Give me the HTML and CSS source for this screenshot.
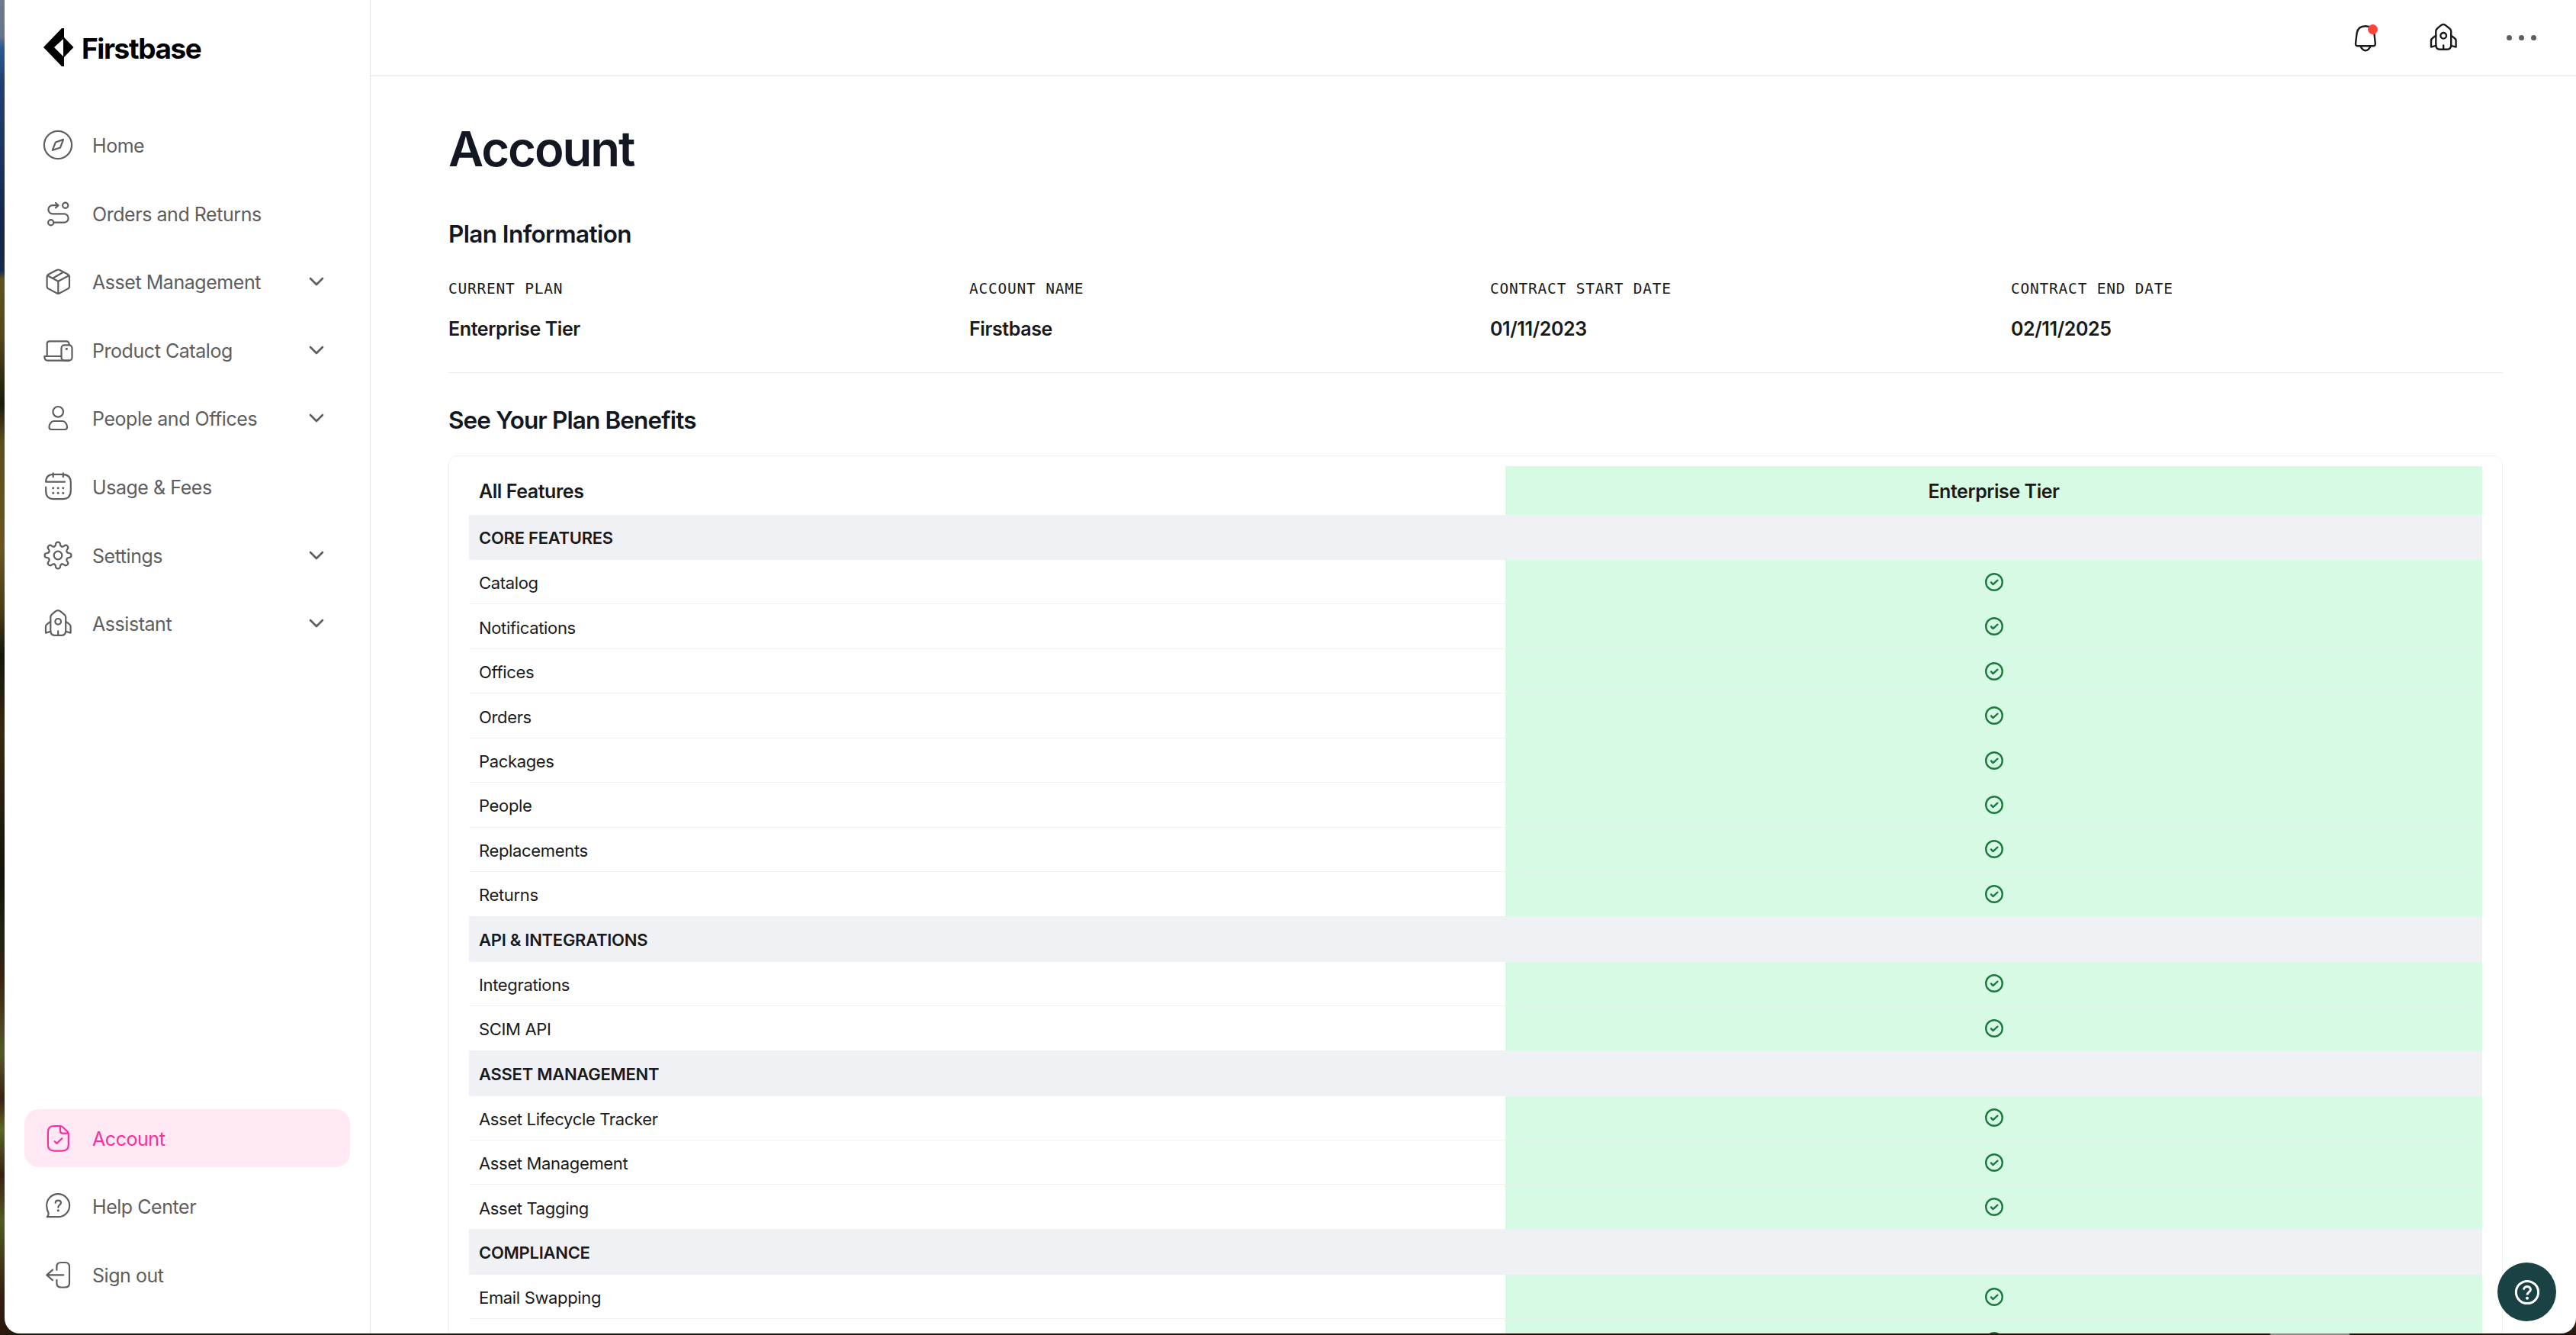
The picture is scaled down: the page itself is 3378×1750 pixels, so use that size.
FILE: index.html
```
<!DOCTYPE html>
<html lang="en">
    <head>
        <meta charset="UTF-8">
        <title>Account | Firstbase</title>
        <link rel="stylesheet" href="styles.css">
    </head>
    <body>
        <!-- Shared icons -->
        <svg class="sprite" aria-hidden="true">
            <symbol id="chevron" viewBox="0 0 20 12">
                <path d="M2 2l8 8 8-8"/>
            </symbol>
            <symbol id="rocket" viewBox="0 0 40 40">
                <path d="M10.3 11.5C10.3 9 12 8.6 16.7 4.4Q20 1.8 23.3 4.4C28 8.6 30.2 9 30.2 11.5V29.5Q30.2 35.8 25 35.8H15.5Q10.3 35.8 10.3 29.5Z"/>
                <circle cx="20.2" cy="17.8" r="3.8"/>
                <path d="M10.3 17.8L6.3 20.6Q4 22 4 24.5V32.6L10.3 30.8M30.2 17.8L34.2 20.6Q36.6 22 36.6 24.5V32.6L30.2 30.8M20.2 30.4V35.6"/>
            </symbol>
            <symbol id="tooth" viewBox="0 0 40 40">
                <path d="M15.3 8.4C17.1 7.7 16.8 6.8 17 5.4C17.4 1.6 22.6 1.6 23 5.4C23.2 6.8 22.9 7.7 24.7 8.4"/>
            </symbol>
            <symbol id="check" viewBox="0 0 24 24">
                <circle cx="12" cy="12" r="10.8"/>
                <path d="M8 12.4l2.5 2.7 6-5.4"/>
            </symbol>
        </svg>

        <div class="window">
            <aside class="sidebar">
                <div class="logo">
                    <svg class="logo-mark" viewBox="0 0 40 50">
                        <path fill-rule="evenodd" d="M24 0H27V12L39.5 25 27 38V50H24L0 25ZM26 14L14 25 26 37Z"/>
                    </svg>
                    <span>Firstbase</span>
                </div>

                <nav class="nav">
                    <a class="nav-item">
                        <svg class="icon" viewBox="0 0 40 40"><circle cx="20" cy="20" r="18.1"/><path d="M27 12.9L17.6 16.2Q17 16.5 16.6 17.2L12.8 26.9 22.4 23.7Q23.1 23.4 23.4 22.7Z"/></svg>
                        <span>Home</span>
                    </a>
                    <a class="nav-item">
                        <svg class="icon" viewBox="0 0 40 40"><circle cx="29.7" cy="9.2" r="3.6"/><circle cx="10.7" cy="31.7" r="3.6"/><path d="M20.3 9.2H13A5.6 5.6 0 0 0 13 20.4H28A5.6 5.6 0 0 1 28 31.7H14.5M17 6l3.6 3.2-3.6 3.2"/></svg>
                        <span>Orders and Returns</span>
                    </a>
                    <a class="nav-item">
                        <svg class="icon" viewBox="0 0 40 40"><path d="M18.3 5Q20.3 4 22.3 5L33.2 10.8Q35 11.8 35 13.8V26.5Q35 28.5 33.2 29.4L22.3 35.3Q20.3 36.4 18.3 35.3L7.4 29.4Q5.6 28.5 5.6 26.5V13.8Q5.6 11.8 7.4 10.8Z"/><path d="M6.3 12.2L20.3 19.8 34.3 12.2M20.3 19.8V36M13.2 15.8L27 7.8"/></svg>
                        <span>Asset Management</span>
                        <svg class="chevron"><use href="#chevron"/></svg>
                    </a>
                    <a class="nav-item">
                        <svg class="icon" viewBox="0 0 40 40"><path d="M5.7 27.5V11.5Q5.7 8.3 9 8.3H31Q34.6 8.3 34.8 13.2M24.3 28H2.3Q2.3 33.6 6.5 33.6H34.5"/><rect x="24.5" y="13.4" width="14" height="20.2" rx="4"/><circle class="dot" cx="31.3" cy="18.3" r="1.6"/></svg>
                        <span>Product Catalog</span>
                        <svg class="chevron"><use href="#chevron"/></svg>
                    </a>
                    <a class="nav-item">
                        <svg class="icon" viewBox="0 0 40 40"><circle cx="20.2" cy="11.8" r="6.8"/><path d="M14.5 24H26C29.5 24 32 28.5 32 32Q32 35 29 35H11.5Q8.5 35 8.5 32C8.5 28.5 11 24 14.5 24Z"/></svg>
                        <span>People and Offices</span>
                        <svg class="chevron"><use href="#chevron"/></svg>
                    </a>
                    <a class="nav-item">
                        <svg class="icon" viewBox="0 0 40 40"><path d="M29 13.7H4.2Q4.2 3.9 14 3.9H26Q36.8 3.9 36.8 15V25Q36.8 36.1 26 36.1H14.5Q4.2 36.1 4.2 25.5V20.7M13.7 2.4V7.2M26.8 2.4V7.2"/><g class="dot"><circle cx="13.7" cy="21.7" r="1.5"/><circle cx="20.2" cy="21.7" r="1.5"/><circle cx="26.8" cy="21.7" r="1.5"/><circle cx="13.7" cy="28.3" r="1.5"/><circle cx="20.2" cy="28.3" r="1.5"/><circle cx="26.8" cy="28.3" r="1.5"/></g></svg>
                        <span>Usage &amp; Fees</span>
                    </a>
                    <a class="nav-item">
                        <svg class="icon" viewBox="0 0 40 40"><circle cx="20" cy="20" r="5.3"/><use href="#tooth"/><use href="#tooth" transform="rotate(45 20 20)"/><use href="#tooth" transform="rotate(90 20 20)"/><use href="#tooth" transform="rotate(135 20 20)"/><use href="#tooth" transform="rotate(180 20 20)"/><use href="#tooth" transform="rotate(225 20 20)"/><use href="#tooth" transform="rotate(270 20 20)"/><use href="#tooth" transform="rotate(315 20 20)"/></svg>
                        <span>Settings</span>
                        <svg class="chevron"><use href="#chevron"/></svg>
                    </a>
                    <a class="nav-item">
                        <svg class="icon"><use href="#rocket"/></svg>
                        <span>Assistant</span>
                        <svg class="chevron"><use href="#chevron"/></svg>
                    </a>
                </nav>

                <nav class="nav nav-bottom">
                    <a class="nav-item active">
                        <svg class="icon" viewBox="0 0 40 40"><path d="M23 4H15Q6.9 4 6.9 12V28.5Q6.9 36.6 15 36.6H25.7Q33.8 36.6 33.8 28.5V14.5Q33.8 12.5 32.4 11.2L26 5.3Q24.8 4 23 4V10.5Q23 13.7 26.2 13.7H33.4M15.7 24.2l2.8 2.7 6.8-6.6"/></svg>
                        <span>Account</span>
                    </a>
                    <a class="nav-item">
                        <svg class="icon" viewBox="0 0 40 40"><path d="M20.3 34.2H5.8Q8 31.2 7.7 29.5Q5.2 25 5.2 19.6A15 15 0 1 1 20.3 34.2ZM16.7 15.8C16.7 11.6 24 11.6 24 15.8C24 18.5 20.3 18.5 20.3 21.7"/><circle class="dot" cx="20.3" cy="25.8" r="1.6"/></svg>
                        <span>Help Center</span>
                    </a>
                    <a class="nav-item">
                        <svg class="icon" viewBox="0 0 40 40"><path d="M18.4 13.8V9.5Q18.4 4 24 4H29.5Q35 4 35 9.5V31Q35 36.5 29.5 36.5H24Q18.4 36.5 18.4 31V26.8M27.3 20.4H5.3M13 13.6L5.3 20.4 13 27.2"/></svg>
                        <span>Sign out</span>
                    </a>
                </nav>
            </aside>

            <div class="page">
                <header class="topbar">
                    <div class="bell">
                        <svg class="icon" viewBox="0 0 40 40"><path d="M10 31.3Q6.8 31.3 7 28L8.6 14.5C9.6 8 14 5.2 20 5.2C26 5.2 30.4 8 31.4 14.5L32.8 28Q33 31.3 30 31.3ZM13.5 31.8Q16 37.2 20 37.2Q24 37.2 26.5 31.8"/></svg>
                        <span class="badge"></span>
                    </div>
                    <svg class="icon"><use href="#rocket"/></svg>
                    <div class="more"><i></i><i></i><i></i></div>
                </header>

                <main class="content">
                    <h1>Account</h1>
                    <h2>Plan Information</h2>
                    <div class="plan">
                        <div>
                            <div class="plan-label">CURRENT PLAN</div>
                            <div class="plan-value">Enterprise Tier</div>
                        </div>
                        <div>
                            <div class="plan-label">ACCOUNT NAME</div>
                            <div class="plan-value">Firstbase</div>
                        </div>
                        <div>
                            <div class="plan-label">CONTRACT START DATE</div>
                            <div class="plan-value">01/11/2023</div>
                        </div>
                        <div>
                            <div class="plan-label">CONTRACT END DATE</div>
                            <div class="plan-value">02/11/2025</div>
                        </div>
                    </div>

                    <h2 class="benefits-title">See Your Plan Benefits</h2>
                    <div class="card">
                        <div class="row head"><div class="name">All Features</div><div class="tier">Enterprise Tier</div></div>
                        <div class="row group">CORE FEATURES</div>
                        <div class="row"><div class="name">Catalog</div><div class="tier"><svg class="check"><use href="#check"/></svg></div></div>
                        <div class="row"><div class="name">Notifications</div><div class="tier"><svg class="check"><use href="#check"/></svg></div></div>
                        <div class="row"><div class="name">Offices</div><div class="tier"><svg class="check"><use href="#check"/></svg></div></div>
                        <div class="row"><div class="name">Orders</div><div class="tier"><svg class="check"><use href="#check"/></svg></div></div>
                        <div class="row"><div class="name">Packages</div><div class="tier"><svg class="check"><use href="#check"/></svg></div></div>
                        <div class="row"><div class="name">People</div><div class="tier"><svg class="check"><use href="#check"/></svg></div></div>
                        <div class="row"><div class="name">Replacements</div><div class="tier"><svg class="check"><use href="#check"/></svg></div></div>
                        <div class="row"><div class="name">Returns</div><div class="tier"><svg class="check"><use href="#check"/></svg></div></div>
                        <div class="row group">API &amp; INTEGRATIONS</div>
                        <div class="row"><div class="name">Integrations</div><div class="tier"><svg class="check"><use href="#check"/></svg></div></div>
                        <div class="row"><div class="name">SCIM API</div><div class="tier"><svg class="check"><use href="#check"/></svg></div></div>
                        <div class="row group">ASSET MANAGEMENT</div>
                        <div class="row"><div class="name">Asset Lifecycle Tracker</div><div class="tier"><svg class="check"><use href="#check"/></svg></div></div>
                        <div class="row"><div class="name">Asset Management</div><div class="tier"><svg class="check"><use href="#check"/></svg></div></div>
                        <div class="row"><div class="name">Asset Tagging</div><div class="tier"><svg class="check"><use href="#check"/></svg></div></div>
                        <div class="row group">COMPLIANCE</div>
                        <div class="row"><div class="name">Email Swapping</div><div class="tier"><svg class="check"><use href="#check"/></svg></div></div>
                        <div class="row"><div class="name"></div><div class="tier"><svg class="check"><use href="#check"/></svg></div></div>
                    </div>
                </main>
            </div>

            <button class="help-btn">
                <svg viewBox="0 0 34 34"><circle cx="17" cy="17" r="14.6"/><path d="M12.4 13.6C12.6 8.2 21.4 8.2 21.4 13.4C21.4 16.6 17 16.8 17 20.6"/><circle class="dot" cx="17" cy="24.8" r="2"/></svg>
            </button>
        </div>
    </body>
</html>
```
FILE: styles.css
```
* {
    box-sizing: border-box;
}
body {
    margin: 0;
    height: 1750px;
    padding-left: 6px;
    overflow: hidden;
    font-family: Inter, "Liberation Sans", sans-serif;
    color: #1a1a1a;
    /* desktop wallpaper behind the window */
    background: linear-gradient(90deg, transparent 6px, #1b1a0b 6px, #241309 2976px, #8b8a86 2978px, #8b8a86 3080px, #241309 3082px) 0 100% / 100% 2px no-repeat,
        linear-gradient(#6f7a8c 0, #66758c 48px, #2b5a94 62px, #223f70 110px, #1c3560 200px, #14254a 300px, #182a4e 355px, #5d531f 366px, #54481c 440px, #1b1a0b 530px, #5d4e1d 580px, #6b5522 720px, #4a3c16 800px, #15150b 860px, #382a10 960px, #15120a 1150px, #1d2410 1220px, #3a2110 1280px, #55592a 1380px, #3b2112 1440px, #5b6426 1480px, #3a2013 1540px, #525a22 1600px, #351d10 1700px, #2a1a0e 1750px);
}
h1, h2 {
    margin: 0;
    font-weight: 600;
    color: #131722;
}
.sprite {
    display: none;
}
.window {
    display: flex;
    height: 1748px;
    background: #fff;
    border-radius: 0 0 20px 20px;
    overflow: hidden;
}

/* Icons */
.icon {
    width: 40px;
    height: 40px;
    flex: none;
    fill: none;
    stroke: currentColor;
    stroke-width: 2.2;
    stroke-linecap: round;
    stroke-linejoin: round;
}
.dot {
    fill: currentColor;
    stroke: none;
}
.chevron {
    width: 20px;
    height: 12px;
    margin-left: auto;
    fill: none;
    stroke: currentColor;
    stroke-width: 2.6;
    stroke-linecap: round;
    stroke-linejoin: round;
}

/* Sidebar */
.sidebar {
    display: flex;
    flex-direction: column;
    width: 480px;
    padding: 37px 26px 39px;
    border-right: 1px solid #e3e3e3;
    color: #5e5e5e;
}
.logo {
    display: flex;
    align-items: center;
    gap: 10px;
    height: 50px;
    margin-bottom: 65px;
    padding-left: 25px;
    color: #000;
    font-size: 37px;
    font-weight: 700;
    letter-spacing: -1.4px;
}
.logo span {
    padding-top: 3px;
}
.logo-mark {
    width: 40px;
    height: 50px;
}
.nav {
    display: flex;
    flex-direction: column;
    gap: 13.6px;
}
.nav-bottom {
    margin-top: auto;
}
.nav-item {
    display: flex;
    align-items: center;
    height: 76px;
    padding: 0 34px 0 24px;
    border-radius: 19px;
    font-size: 25px;
    letter-spacing: -0.45px;
}
.nav-item span {
    margin-left: 25px;
    padding-top: 2px;
}
.nav-item.active {
    background: #fee8f4;
    color: #f9309b;
}

/* Top bar */
.page {
    flex: 1;
    min-width: 0;
}
.topbar {
    display: flex;
    align-items: center;
    justify-content: flex-end;
    height: 100px;
    padding: 0 52px 1px 0;
    border-bottom: 1px solid #e3e3e3;
    color: #1a1a1a;
}
.topbar .icon {
    display: block;
    stroke-width: 2.4;
}
.bell {
    position: relative;
    margin-right: 62px;
}
.badge {
    position: absolute;
    top: 3px;
    right: 4px;
    width: 13px;
    height: 13px;
    border-radius: 50%;
    background: #ff453a;
}
.more {
    display: flex;
    gap: 9px;
    margin-left: 63px;
}
.more i {
    width: 7px;
    height: 7px;
    border-radius: 50%;
    background: #5e5e5e;
}

/* Content */
.content {
    padding: 55px 96px 0 102px;
}
h1 {
    margin-bottom: 52px;
    font-size: 63.5px;
    line-height: 80px;
    letter-spacing: -2.1px;
}
h2 {
    font-size: 31.5px;
    line-height: 40px;
    letter-spacing: -0.6px;
}
.plan {
    display: grid;
    grid-template-columns: repeat(4, 1fr);
    gap: 38px;
    margin-top: 37px;
    padding-bottom: 39px;
    border-bottom: 1px solid #ebeced;
}
.plan-label {
    margin-bottom: 19px;
    font: 19.5px/30px "DejaVu Sans Mono", monospace;
    letter-spacing: 0.78px;
}
.plan-value {
    font-size: 25px;
    font-weight: 600;
    line-height: 36px;
    letter-spacing: -0.4px;
}
.benefits-title {
    margin: 42px 0 26px;
    letter-spacing: -0.88px;
}

/* Feature table */
.card {
    padding: 13px 26px;
    border: 1px solid #f0f1f2;
    border-radius: 12px;
}
.row {
    display: flex;
    height: 58.46px;
    font-size: 22px;
    letter-spacing: -0.34px;
}
.name {
    display: flex;
    align-items: center;
    width: 1359px;
    padding: 3px 13px 0;
    border-bottom: 1px solid #f0f1f2;
}
.tier {
    display: flex;
    flex: 1;
    align-items: center;
    justify-content: center;
    background: #d7fae5;
    border-bottom: 1px solid #e2f7ea;
}
.head {
    height: 64px;
    font-size: 25px;
    font-weight: 600;
    letter-spacing: -0.45px;
}
.head .name, .head .tier {
    padding-top: 2px;
    border: none;
}
.group {
    align-items: center;
    height: 59px;
    padding: 1px 0 0 13px;
    background: #f0f1f4;
    font-weight: 600;
    letter-spacing: -0.27px;
}
.check {
    width: 24px;
    height: 24px;
    fill: none;
    stroke: #1d7a3e;
    stroke-width: 2.4;
    stroke-linecap: round;
    stroke-linejoin: round;
}

.help-btn {
    position: absolute;
    top: 1655px;
    left: 3275px;
    display: flex;
    align-items: center;
    justify-content: center;
    width: 77px;
    height: 77px;
    padding: 0;
    border: none;
    border-radius: 50%;
    background: #1a4245;
    color: #fff;
}
.help-btn svg {
    width: 34px;
    height: 34px;
    fill: none;
    stroke: #fff;
    stroke-width: 3;
}
.help-btn .dot {
    fill: #fff;
    stroke: none;
}
```
